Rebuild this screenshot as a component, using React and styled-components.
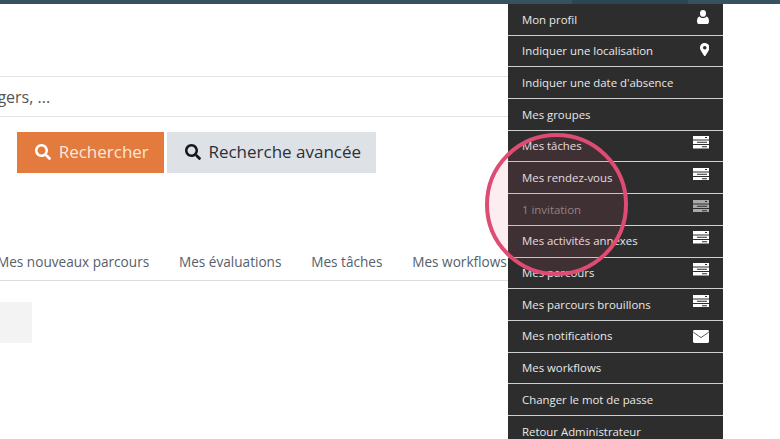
import React from 'react'
import styled, { createGlobalStyle } from 'styled-components'
import { FaSearch } from 'react-icons/fa'

const GlobalStyle = createGlobalStyle`
  html, body {
    margin: 0;
    padding: 0;
    background: #fff;
    overflow: hidden;
  }
  body {
    font-family: "Open Sans", "Liberation Sans", sans-serif;
  }
`;

const Page = styled.div`
  position: relative;
  width: 780px;
  height: 439px;
  overflow: hidden;
  background: #fff;
`;

const TopBar = styled.div`
  display: flex;
  height: 4px;
  padding-left: 572px;
  background: #36515f;
`;

const ActiveSegment = styled.div`
  width: 116px;
  background: #2b4555;
`;

const Content = styled.div`
  display: flex;
  flex-direction: column;
  padding-top: 72px;
`;

const SearchField = styled.div`
  height: 39px;
  margin-right: 272px;
  border-top: 1px solid #e4e4e4;
  border-bottom: 1px solid #e4e4e4;
  display: flex;
  align-items: center;
  overflow: hidden;
`;

const Placeholder = styled.span`
  margin-left: -45px;
  font-size: 16px;
  color: #555;
  white-space: nowrap;
`;

const Buttons = styled.div`
  display: flex;
  gap: 3px;
  margin: 15px 0 0 17px;
`;

const Button = styled.button`
  display: flex;
  align-items: center;
  justify-content: center;
  gap: 7.5px;
  width: ${p => p.$width}px;
  height: 40.5px;
  padding: 0 0 1px 3px;
  border: none;
  border-radius: 0;
  background: ${p => (p.$primary ? '#e27b3d' : '#dee1e6')};
  color: ${p => (p.$primary ? '#fbe7da' : '#2b3038')};
  font-family: inherit;
  font-size: 17px;
  svg {
    width: 16px;
    height: 16px;
    color: ${p => (p.$primary ? '#fff' : '#15191e')};
  }
`;

const Tabs = styled.div`
  display: flex;
  align-items: center;
  gap: 29.8px;
  height: 37px;
  margin: 70.5px 272px 0 0;
  border-bottom: 1px solid #dcdcdc;
  overflow: hidden;
`;

const Tab = styled.span`
  flex: none;
  font-size: 13.6px;
  color: #55606b;
  white-space: nowrap;
  &:first-child {
    margin-left: -3px;
  }
`;

const GreyBlock = styled.div`
  width: 32px;
  height: 41px;
  margin-top: 21px;
  background: #f3f3f3;
`;

const Menu = styled.ul`
  position: absolute;
  top: 4px;
  left: 508px;
  width: 215px;
  margin: 0;
  padding: 0;
  list-style: none;
  background: #2d2d2d;
`;

const MenuItem = styled.li`
  display: flex;
  justify-content: space-between;
  align-items: flex-start;
  box-sizing: border-box;
  height: 31.7px;
  padding: 6.6px 14px 0;
  border-bottom: 1.2px solid #cfcfcf;
  font-size: 11.4px;
  line-height: 17px;
  color: ${p => (p.$dim ? '#8c8888' : '#e8e8e8')};
  &:last-child {
    border-bottom: none;
  }
`;

const IconSlot = styled.span`
  display: flex;
  justify-content: flex-end;
  width: 17px;
  margin-top: ${p => p.$shift}px;
  color: ${p => (p.$dim ? '#aaa' : '#fff')};
  svg {
    display: block;
  }
`;

const Highlight = styled.div`
  position: absolute;
  left: 485px;
  top: 133px;
  width: 143px;
  height: 143px;
  box-sizing: border-box;
  border: 4px solid #de4c74;
  border-radius: 50%;
  background: rgba(222, 76, 116, 0.1);
`;

const ListIcon = () => (
  <svg width="16" height="12.5" viewBox="0 0 16 12.5" fill="currentColor">
    <path d="M0 0h16v3.4H0z M0 4.6h16v3.4H0z M0 9.1h16v3.4H0z" />
    <path d="M12 1h2v1h-2z M4 5.8h10v1H4z M9 10.3h5v1H9z" fill="#2d2d2d" />
  </svg>
)

const UserIcon = () => (
  <svg width="12" height="14" viewBox="0 0 12 14" fill="currentColor">
    <ellipse cx="6" cy="3.4" rx="3" ry="3.4" />
    <path d="M2.6 6.4C3.4 7.4 4.6 8 6 8s2.6-.6 3.4-1.6C11 6.8 12 8.4 12 11.4 12 13 11 14 9.6 14H2.4C1 14 0 13 0 11.4 0 8.4 1 6.8 2.6 6.4z" />
  </svg>
)

const MarkerIcon = () => (
  <svg width="9.5" height="13" viewBox="0 0 9.5 13" fill="currentColor">
    <path
      fillRule="evenodd"
      d="M4.75 0C7.4 0 9.5 2.1 9.5 4.7c0 1.1-.3 1.7-.8 2.7L5.6 12.4c-.2.4-.5.6-.85.6s-.7-.2-.85-.6L.8 7.4C.3 6.4 0 5.8 0 4.7 0 2.1 2.1 0 4.75 0zm0 2.9a1.8 1.8 0 1 0 0 3.6 1.8 1.8 0 0 0 0-3.6z"
    />
  </svg>
)

const MailIcon = () => (
  <svg width="16" height="13" viewBox="0 0 16 13" fill="currentColor">
    <rect width="16" height="13" rx="1.4" />
    <path d="M0.3 2.2L8 7.6l7.7-5.4" fill="none" stroke="#5a5a5a" strokeWidth="1" />
  </svg>
)

const items = [
  { label: 'Mon profil', icon: <UserIcon />, shift: -0.6 },
  { label: 'Indiquer une localisation', icon: <MarkerIcon />, shift: 0.4 },
  { label: "Indiquer une date d'absence" },
  { label: 'Mes groupes' },
  { label: 'Mes tâches', icon: <ListIcon /> },
  { label: 'Mes rendez-vous', icon: <ListIcon /> },
  { label: '1 invitation', icon: <ListIcon />, dim: true },
  { label: 'Mes activités annexes', icon: <ListIcon /> },
  { label: 'Mes parcours', icon: <ListIcon /> },
  { label: 'Mes parcours brouillons', icon: <ListIcon /> },
  { label: 'Mes notifications', icon: <MailIcon />, shift: 2.4 },
  { label: 'Mes workflows' },
  { label: 'Changer le mot de passe' },
  { label: 'Retour Administrateur' },
]

const tabs = ['Mes nouveaux parcours', 'Mes évaluations', 'Mes tâches', 'Mes workflows']

export default function App() {
  return (
    <Page>
      <GlobalStyle />
      <TopBar>
        <ActiveSegment />
      </TopBar>
      <Content>
        <SearchField>
          <Placeholder>managers, ...</Placeholder>
        </SearchField>
        <Buttons>
          <Button $primary $width={147}>
            <FaSearch />
            Rechercher
          </Button>
          <Button $width={209}>
            <FaSearch />
            Recherche avancée
          </Button>
        </Buttons>
        <Tabs>
          {tabs.map(tab => (
            <Tab key={tab}>{tab}</Tab>
          ))}
        </Tabs>
        <GreyBlock />
      </Content>
      <Menu>
        {items.map(item => (
          <MenuItem key={item.label} $dim={item.dim}>
            <span>{item.label}</span>
            {item.icon && (
              <IconSlot $dim={item.dim} $shift={item.shift ?? -1.1}>
                {item.icon}
              </IconSlot>
            )}
          </MenuItem>
        ))}
      </Menu>
      <Highlight />
    </Page>
  )
}
